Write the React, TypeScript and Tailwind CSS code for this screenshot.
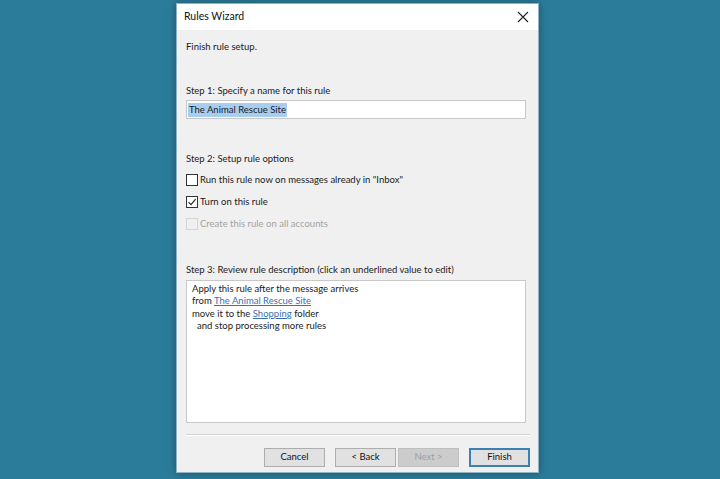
import React from "react";

function Checkbox({ checked, disabled }: { checked?: boolean; disabled?: boolean }) {
  return (
    <div
      className={
        "w-[12px] h-[12px] border flex items-center justify-center shrink-0 " +
        (disabled ? "border-[#d6d6d6] bg-[#f0f0f0]" : "border-[#333333] bg-white")
      }
    >
      {checked && (
        <svg width="10" height="10" viewBox="0 0 10 10">
          <path d="M1.5 5.2 L4 7.6 L8.6 2.2" fill="none" stroke="#222" strokeWidth="1.1" />
        </svg>
      )}
    </div>
  );
}

function Button({ label, disabled, primary }: { label: string; disabled?: boolean; primary?: boolean }) {
  return (
    <div
      className={
        "w-[61px] h-[19px] flex items-center justify-center text-[9.5px] " +
        (disabled
          ? "bg-[#cccccc] border border-[#bfbfbf] text-[#a0a0a0]"
          : primary
          ? "bg-[#e1e1e1] border-2 border-[#3c7fb1] text-[#111]"
          : "bg-[#e1e1e1] border border-[#adadad] text-[#111]")
      }
    >
      {label}
    </div>
  );
}

export default function App() {
  return (
    <div
      className="w-[720px] h-[479px] bg-[#2b7c9a] overflow-hidden pl-[176px] pt-[3px]"
      style={{ fontFamily: 'Lato, "Noto Sans", "Liberation Sans", sans-serif' }}
    >
      <div className="w-[363px] h-[470px] bg-[#f0f0f0] border border-[#8fb3c3] shadow-[0_0_8px_rgba(0,0,0,0.35)] flex flex-col">
        <div className="h-[26px] bg-white flex items-center justify-between pl-[7px] pr-[9px] shrink-0">
          <span className="text-[10.5px] text-[#111]">Rules Wizard</span>
          <svg width="12" height="12" viewBox="0 0 12 12">
            <path d="M1 1 L11 11 M11 1 L1 11" stroke="#222" strokeWidth="1.1" />
          </svg>
        </div>
        <div className="flex flex-col pl-[9px] text-[9.5px] text-[#1a1a1a]">
          <div className="mt-[9px] h-[16px] leading-[16px]">Finish rule setup.</div>
          <div className="mt-[28px] h-[16px] leading-[16px]">Step 1: Specify a name for this rule</div>
          <div className="mt-[1px] w-[340px] h-[19px] bg-white border border-[#c8c8c8] flex items-center pl-[1px]">
            <span className="bg-[#a9cdee] h-[14px] leading-[14px] px-[1px]">The Animal Rescue Site</span>
          </div>
          <div className="mt-[32px] h-[16px] leading-[16px]">Step 2: Setup rule options</div>
          <div className="mt-[5px] h-[16px] flex items-center gap-[2px]">
            <Checkbox />
            <span className="leading-[16px]">Run this rule now on messages already in "Inbox"</span>
          </div>
          <div className="mt-[6px] h-[16px] flex items-center gap-[2px]">
            <Checkbox checked />
            <span className="leading-[16px]">Turn on this rule</span>
          </div>
          <div className="mt-[6px] h-[16px] flex items-center gap-[2px]">
            <Checkbox disabled />
            <span className="leading-[16px] text-[#a3a3a3]">Create this rule on all accounts</span>
          </div>
          <div className="mt-[30px] h-[16px] leading-[16px]">
            Step 3: Review rule description (click an underlined value to edit)
          </div>
          <div className="mt-[2px] w-[340px] h-[143px] bg-white border border-[#c8c8c8] pl-[5px] pt-[2px] leading-[12.4px]">
            <div>Apply this rule after the message arrives</div>
            <div>
              from <span className="text-[#3a72b0] underline">The Animal Rescue Site</span>
            </div>
            <div>
              move it to the <span className="text-[#3a72b0] underline">Shopping</span> folder
            </div>
            <div className="pl-[5px]">and stop processing more rules</div>
          </div>
          <div className="mt-[11px] w-[344px] h-[2px] border-t border-[#d5d5d5] border-b border-b-white"></div>
          <div className="mt-[12px] w-[344px] flex justify-end">
            <div className="flex">
              <Button label="Cancel" />
              <div className="w-[10px]" />
              <Button label="< Back" />
              <div className="w-[2px]" />
              <Button label="Next >" disabled />
              <div className="w-[10px]" />
              <Button label="Finish" primary />
            </div>
          </div>
        </div>
      </div>
    </div>
  );
}
